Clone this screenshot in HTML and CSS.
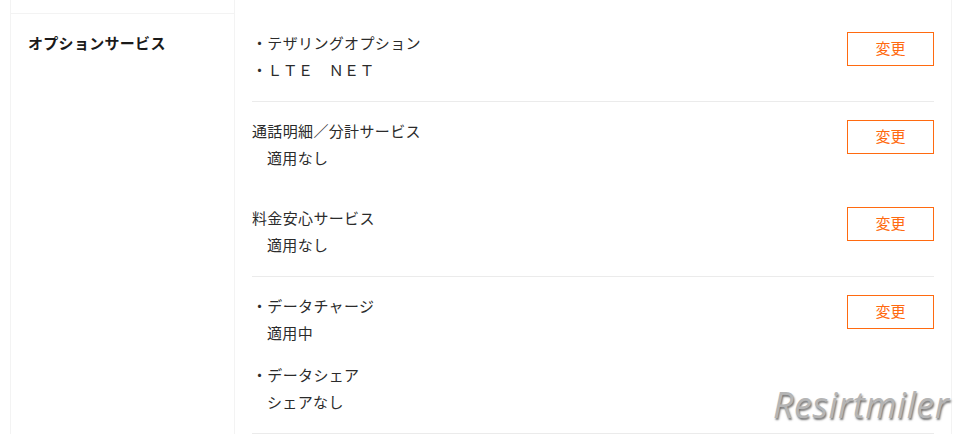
FILE: index.html
```html
<!DOCTYPE html>
<html lang="ja">
<head>
    <meta charset="UTF-8">
    <meta name="viewport" content="width=device-width, initial-scale=1.0">
    <title>オプションサービス</title>
    <link rel="stylesheet" href="styles.css">
</head>
<body>
    <div class="table">
        <!-- 前の行 (上部) -->
        <div class="tr top">
            <div class="th"></div>
            <div class="td"></div>
        </div>

        <div class="tr">
            <div class="th">オプションサービス</div>
            <div class="td">
                <div class="item sep">
                    <div class="text">
                        <p>・テザリングオプション</p>
                        <p>・ＬＴＥ　ＮＥＴ</p>
                    </div>
                    <button class="btn">変更</button>
                </div>

                <div class="item">
                    <div class="text">
                        <p>通話明細／分計サービス</p>
                        <p class="sub">適用なし</p>
                    </div>
                    <button class="btn">変更</button>
                </div>

                <div class="item sep">
                    <div class="text">
                        <p>料金安心サービス</p>
                        <p class="sub">適用なし</p>
                    </div>
                    <button class="btn">変更</button>
                </div>

                <div class="item sep">
                    <div class="text">
                        <div class="group">
                            <p>・データチャージ</p>
                            <p class="sub">適用中</p>
                        </div>
                        <div class="group">
                            <p>・データシェア</p>
                            <p class="sub">シェアなし</p>
                        </div>
                    </div>
                    <button class="btn">変更</button>
                </div>
            </div>
        </div>
    </div>

    <div class="watermark">Resirtmiler</div>
</body>
</html>
```

FILE: styles.css
```css
body {
    margin: 0;
    font-family: "Noto Sans CJK JP", "Noto Sans", sans-serif;
    font-size: 15px;
    color: #2b2b2b;
    background: #fff;
    overflow: hidden;
}

p {
    margin: 0;
}

.table {
    margin-left: 10px;
    width: 940px;
    border-left: 1px solid #f3f3f3;
    border-right: 1px solid #f3f3f3;
}

.tr {
    display: flex;
}

.th {
    width: 224px;
    flex-shrink: 0;
    padding: 15px 0 0 17px;
    box-sizing: border-box;
    border-right: 1px solid #f3f3f3;
    font-weight: bold;
    color: #1a1a1a;
    line-height: 27px;
    letter-spacing: 0.3px;
}

.td {
    flex: 1;
    padding: 0 17px 0 17px;
}

.tr.top {
    height: 14px;
}

.tr.top .th {
    border-bottom: 1px solid #f3f3f3;
    padding: 0;
}

.item {
    display: flex;
    justify-content: space-between;
    align-items: flex-start;
    padding: 15px 0 18px;
    line-height: 27px;
}

.item.sep {
    border-bottom: 1px solid #ebebeb;
}

.text {
    letter-spacing: 0.35px;
}

.sub {
    padding-left: 15px;
}

.group + .group {
    margin-top: 15px;
}

.btn {
    margin-top: 3px;
    width: 87px;
    height: 34px;
    background: #fff;
    border: 1px solid #ff6a10;
    color: #ff6a10;
    font-family: "Noto Sans CJK JP", sans-serif;
    font-size: 15px;
    line-height: 30px;
    padding: 0 0 2px;
    cursor: pointer;
}

.watermark {
    position: absolute;
    left: 773px;
    top: 380px;
    font-family: "Open Sans", sans-serif;
    font-style: italic;
    font-size: 36px;
    color: #b5b5b5;
    text-shadow: 1px 2px 2px rgba(0, 0, 0, 0.55);
    letter-spacing: 0.5px;
}
```
